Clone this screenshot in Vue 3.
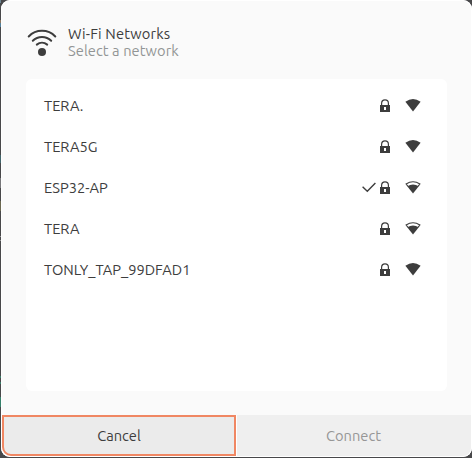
<script setup>
const networks = [
  { name: 'TERA.', full: true, active: false },
  { name: 'TERA5G', full: true, active: false },
  { name: 'ESP32-AP', full: false, active: true },
  { name: 'TERA', full: false, active: false },
  { name: 'TONLY_TAP_99DFAD1', full: true, active: false },
]
</script>

<template>
  <div class="backdrop">
    <div class="dialog">
      <header class="header">
        <svg class="wifi" viewBox="0 0 32 28" fill="none" stroke="#3d3d3d" stroke-width="2" stroke-linecap="round">
          <path d="M2.7 8.5A18.4 18.4 0 0 1 29.3 8.5" />
          <path d="M6.8 12.7A13 13 0 0 1 25.2 12.7" />
          <path d="M10.8 16.6A8.4 8.4 0 0 1 21.2 16.6" />
          <circle cx="16" cy="24" r="4" fill="#3d3d3d" stroke="none" />
        </svg>
        <div class="titles">
          <div class="title">Wi-Fi Networks</div>
          <div class="subtitle">Select a network</div>
        </div>
      </header>
      <ul class="list">
        <li v-for="n in networks" :key="n.name" class="row">
          <span class="name">{{ n.name }}</span>
          <svg v-if="n.active" class="check" viewBox="0 0 14 13">
            <path d="M.6 5.8 5.3 10.2 13.4 2" fill="none" stroke="#3d3d3d" stroke-width="1.4" />
          </svg>
          <svg class="lock" viewBox="0 0 10 13">
            <path d="M1.6 6.5V4.2a3.4 3.4 0 0 1 6.8 0V6.5" fill="none" stroke="#3d3d3d" stroke-width="1.2" />
            <path fill-rule="evenodd" d="M0 6H10V13H0ZM4 8V11H6V8Z" fill="#3d3d3d" />
          </svg>
          <svg class="signal" viewBox="0 0 16 13">
            <path v-if="n.full" d="M.4 2.8Q8-2.6 15.6 2.8L8 12.6Z" fill="#3d3d3d" />
            <template v-else>
              <path d="M2.8 5.2 1.1 3Q8-1.6 14.9 3L13.2 5.2" fill="none" stroke="#3d3d3d" stroke-width="1.1" />
              <path d="M2.2 5.3Q8 1.5 13.8 5.3L8 12.6Z" fill="#3d3d3d" />
            </template>
          </svg>
        </li>
      </ul>
      <footer class="actions">
        <button class="button cancel">Cancel</button>
        <button class="button connect" disabled>Connect</button>
      </footer>
    </div>
  </div>
</template>

<style>
body { margin: 0; overflow: hidden; }
</style>

<style scoped>
.backdrop {
  box-sizing: border-box;
  width: 472px;
  height: 458px;
  padding: 0 0 1px 1px;
  /* Slivers of the window behind the dialog */
  background:
    linear-gradient(
      #6d8794 0 3px, #48484a 3px 20px, #8a7660 20px 23px, #53809b 23px 27px,
      #48484a 27px 155px, #42656b 155px 163px, #48484a 163px 178px,
      #77777a 178px 188px, #48484a 188px 201px, #6b6850 201px 211px,
      #48484a 211px 236px, #929294 236px 237px, #48484a 237px 240px,
      #929294 240px 241px, #48484a 241px 376px, #397c68 376px 378px,
      #48484a 378px 382px, #397c68 382px 384px, #48484a 384px 397px,
      #35816b 397px 407px, #48484a 407px
    ) 0 0 / 1px 100% no-repeat,
    #48484a;
  font-family: Ubuntu, "Noto Sans", sans-serif;
  font-size: 14.667px;
  color: #3d3d3d;
}
.dialog {
  box-sizing: border-box;
  display: flex;
  flex-direction: column;
  height: 457px;
  padding: 0 1px 1px;
  border-radius: 9px;
  background: #fafafa;
  box-shadow: inset 0 0 0 1px #fff;
  overflow: hidden;
}
.header {
  display: flex;
  gap: 10px;
  height: 55px;
  padding: 24px 0 0 24px;
}
.wifi { width: 32px; height: 28px; margin-top: 4px; }
.titles { line-height: 17px; margin-top: 1px; white-space: nowrap; }
.title { letter-spacing: 0.17px; }
.subtitle { letter-spacing: 0.07px; color: #929595; }
.list {
  box-sizing: border-box;
  width: 421px;
  height: 312px;
  margin: 0 0 0 24px;
  padding: 6px 26px 0 18px;
  border-radius: 6px;
  background: #fff;
  list-style: none;
}
.row { display: flex; align-items: center; height: 41px; }
.name { margin-right: auto; white-space: nowrap; }
.check { width: 14px; height: 13px; margin-right: 4px; }
.lock { width: 10px; height: 13px; margin-right: 15px; }
.signal { width: 16px; height: 13px; }
.actions {
  display: grid;
  grid-template-columns: 234px 234px;
  column-gap: 1px;
  height: 41px;
  margin-top: 24px;
  background: #fff;
}
.button {
  box-sizing: border-box;
  padding: 0;
  border: 0;
  background: #efefef;
  font: inherit;
  color: inherit;
}
.cancel {
  border: 2px solid #f08763;
  border-radius: 0 0 0 9px;
  background: #ebebeb;
}
.connect { padding-right: 1px; border-radius: 0 0 8px; color: #969696; }
</style>
